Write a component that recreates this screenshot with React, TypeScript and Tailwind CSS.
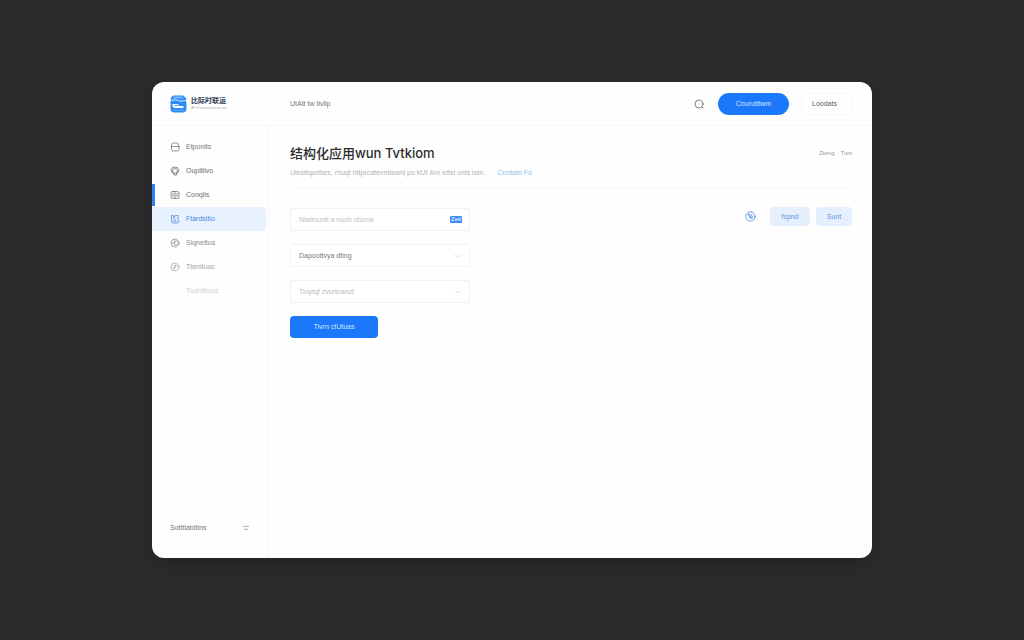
import type { ReactNode } from "react";

const ICON = "size-[10px] shrink-0";

function Icon({ children, className = ICON }: { children: ReactNode; className?: string }) {
  return (
    <svg
      viewBox="0 0 20 20"
      className={className}
      fill="none"
      stroke="currentColor"
      strokeWidth="1.5"
      strokeLinecap="round"
      strokeLinejoin="round"
      aria-hidden="true"
    >
      {children}
    </svg>
  );
}

function Logo() {
  return (
    <svg viewBox="0 0 34 36" className="h-[18px] w-[17px] shrink-0" aria-hidden="true">
      <path d="M9 1h16q4 0 5 4l3 2-2 4q2 3 2 8v8q0 8-8 8H9q-8 0-8-8v-6l1-3-2-3 2-3Q0 1 9 1z" fill="#2e8cf5" />
      <path d="M8 3h16l4 4H5z" fill="#6fb6fb" />
      <path d="M3 11q9-3 14 0t13 0" stroke="#d6eaff" strokeWidth="2" fill="none" />
      <path d="M5 18h11l3 4h8v4H9l-4-3z" fill="#f4faff" />
      <path d="M9 21h8" stroke="#2e8cf5" strokeWidth="1.6" />
      <path d="M6 30q10 2 22 0" stroke="#64acf8" strokeWidth="2" fill="none" />
    </svg>
  );
}

type Item = { label: string; tone: string; icon?: ReactNode; active?: boolean; marked?: boolean };

const items: Item[] = [
  {
    label: "Etponits",
    tone: "text-[#777]",
    icon: (
      <Icon>
        <path d="M3 9V6q0-4 4-4h6q4 0 4 4v3M2 9h16M3 9v6q0 3 3 3h9q3 0 3-3V9" />
      </Icon>
    ),
  },
  {
    label: "Ouplitivo",
    tone: "text-[#6b6b6b]",
    icon: (
      <Icon>
        <path d="M7 15q-5-1-5-7 1-6 8-6t8 6q0 6-5 7M5 9q1-4 5-4 5 0 5 5 0 4-4 4H7q-2-1-2-5M8 15v3h5v-3" />
      </Icon>
    ),
  },
  {
    label: "Conqlis",
    tone: "text-[#6f6f6f]",
    marked: true,
    icon: (
      <Icon>
        <rect x="2" y="3" width="16" height="14" rx="3" />
        <path d="M10 3v14M6 7v6M14 7v6" />
      </Icon>
    ),
  },
  {
    label: "Ftardsitio",
    tone: "text-[#4c86e0]",
    active: true,
    icon: (
      <Icon>
        <path d="M5 3H3v11q0 4 4 4h7q4 0 4-4 0-3-3-5M7 3v6l4 3M11 3l-2 4M13 3h3v5M7 14h6" />
      </Icon>
    ),
  },
  {
    label: "Siqnettus",
    tone: "text-[#8a8a8a]",
    icon: (
      <Icon>
        <circle cx="10" cy="10" r="8" />
        <path d="M9 3l1 5 5-2M3 10h5l2 5 6-3M8 10l2-2" />
      </Icon>
    ),
  },
  {
    label: "Ttenituoc",
    tone: "text-[#a3a3a3]",
    icon: (
      <Icon>
        <circle cx="10" cy="10" r="8" />
        <path d="M8 14V8l5-2-2 5-3 1" />
      </Icon>
    ),
  },
  { label: "Tudnttious", tone: "text-[#cfcfcf]" },
];

function NavItem({ label, tone, icon, active, marked }: Item) {
  return (
    <li className="relative">
      {marked && <span className="absolute inset-y-px left-0 w-[3px] bg-[#2a83f7]" />}
      <a
        href="#"
        aria-current={active ? "page" : undefined}
        className={`mr-0.5 flex h-6 items-center gap-1.5 rounded-r-sm pl-[18px] ${tone} ${active ? "bg-[#e8f1fe]" : ""}`}
      >
        {icon ?? <span className={ICON} />}
        {label}
      </a>
    </li>
  );
}

function SelectField({ label, value, tone }: { label: string; value: string; tone: string }) {
  return (
    <div className="relative">
      <select
        aria-label={label}
        className={`block h-[23px] w-full appearance-none rounded-xs border border-[#f2f2f2] bg-white px-2 text-[7px] ${tone}`}
      >
        <option>{value}</option>
      </select>
      <Icon className="pointer-events-none absolute top-2 right-2 size-2 text-[#c8c8c8]">
        <path d="M3 6l7 7 7-7" />
      </Icon>
    </div>
  );
}

export default function App() {
  return (
    <div className="flex min-h-screen bg-[#2b2b2b] px-38 py-[82px] font-['Liberation_Sans','Noto_Sans_CJK_SC',sans-serif] text-[7px] leading-[10px]">
      <div className="flex min-w-0 flex-1 flex-col overflow-hidden rounded-xl bg-[#fefefe] shadow-[0_6px_16px_rgba(0,0,0,0.18)]">
        <header className="flex h-11 items-center border-b border-[#f7f7f7] pr-5">
          <a href="#" className="flex w-[138px] shrink-0 items-center gap-1 pl-[18px]">
            <Logo />
            <span className="flex flex-col">
              <span className="text-[7px] leading-[9px] font-bold text-[#303d55]">比际时联运</span>
              <span className="text-[4px] leading-[6px] text-[#b0b3b8]">Al Yttnsuuitottow ow</span>
            </span>
          </a>
          <span className="text-[#777]">UtAtt tw tivlip</span>
          <button type="button" aria-label="Search" className="ml-auto text-[#555]">
            <Icon>
              <circle cx="10" cy="10" r="8" />
              <path d="M15 15l3 3" />
            </Icon>
          </button>
          <button type="button" className="ml-3.5 h-[22px] w-[71px] rounded-full bg-[#1b78fb] text-[#d5e7ff]">
            Cnurutfiwm
          </button>
          <button type="button" className="ml-3 h-[22px] w-[51px] rounded-sm border border-[#f6f7f8] pr-1 text-[#526070]">
            Loodats
          </button>
        </header>

        <div className="flex flex-1">
          <aside className="flex w-[117px] shrink-0 flex-col border-r border-[#f7f7f7] pt-[9px] pb-[25px]">
            <nav>
              <ul>
                {items.map((item) => (
                  <NavItem key={item.label} {...item} />
                ))}
              </ul>
            </nav>
            <div className="mt-auto flex items-center justify-between px-[18px] text-[#777]">
              <span>Sotttlatditns</span>
              <button type="button" aria-label="Options">
                <Icon className="size-2">
                  <path d="M3 6h14M6 13h8" />
                </Icon>
              </button>
            </div>
          </aside>

          <main className="flex-1 pt-[18px] pr-5 pl-[21px]">
            <div className="border-b border-[#f6f6f6] pb-[9px]">
              <div className="flex items-center justify-between">
                <h1 className="font-['Inter','Noto_Sans_CJK_SC',sans-serif] text-[13px] leading-[18px] font-medium whitespace-nowrap text-[#2c2c2c]">
                  结构化应用wun Tvtkiom
                </h1>
                <div className="flex gap-1.5 text-[6px] text-[#999]">
                  <a href="#">Zteng</a>
                  <a href="#">Tuni</a>
                </div>
              </div>
              <p className="mt-1.5 flex gap-3 whitespace-nowrap text-[#b3b3b3]">
                <span>Uiesttqortties, rhuqt httprcatexmteard po ktJt Arn ettsl onts iotn.</span>
                <a href="#" className="text-[#8cc4ea]">
                  Cnntatri Fd
                </a>
              </p>
            </div>

            <div className="flex items-start justify-between pt-5">
              <form className="flex w-[180px] flex-col gap-[13px]">
                <div className="relative">
                  <input
                    type="text"
                    aria-label="Name"
                    placeholder="Nlattounti a nuch otionw"
                    className="block h-[23px] w-full rounded-xs border border-[#f2f2f2] bg-white pr-7 pl-2 text-[7px] leading-[10px] placeholder:text-[#c0c0c0]"
                  />
                  <span className="absolute top-2 right-2 rounded-[1px] bg-[#3c8ef3] px-px text-[6px] leading-[7px] text-white">
                    Zeti
                  </span>
                </div>
                <SelectField label="Category" value="Dapoottvya dting" tone="text-[#757575]" />
                <SelectField label="Environment" value="Tiuytqf zvurtoanct" tone="text-[#b8b8b8]" />
                <button type="button" className="h-[22px] w-[88px] rounded-sm bg-[#1b78fb] text-[#d5e7ff]">
                  Tivrn ctUtuas
                </button>
              </form>
              <div className="-mt-px flex items-center gap-1.5">
                <button type="button" aria-label="History" className="mr-2 text-[#4b8fdc]">
                  <Icon className="size-[11px]">
                    <circle cx="10" cy="10" r="8.500" />
                    <path d="M6 6l7 2v5H9L6 6M9 9l4 4" />
                  </Icon>
                </button>
                <button type="button" className="h-[19px] w-10 rounded-sm bg-[#e5effd] text-[#5f97dd]">
                  fspnd
                </button>
                <button type="button" className="h-[19px] w-9 rounded-sm bg-[#e5effd] text-[#5f97dd]">
                  Sunt
                </button>
              </div>
            </div>
          </main>
        </div>
      </div>
    </div>
  );
}
